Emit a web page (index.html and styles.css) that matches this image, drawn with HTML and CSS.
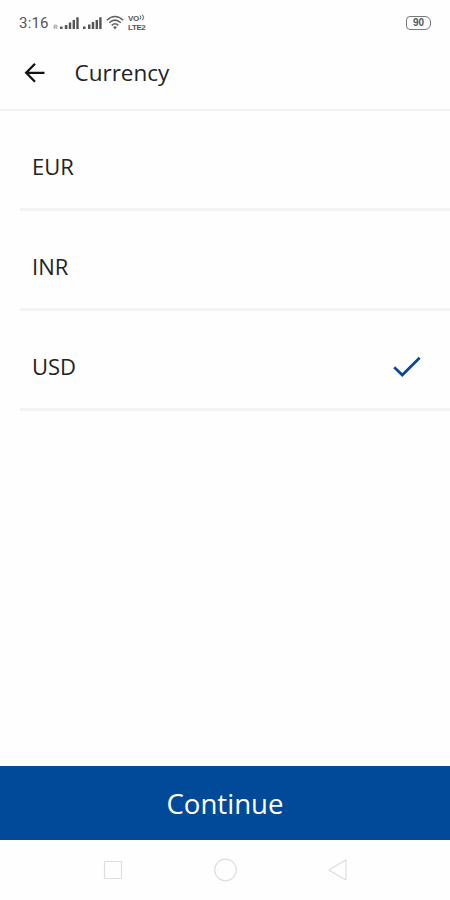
FILE: index.html
```html
<!DOCTYPE html>
<html lang="en">
<head>
<meta charset="utf-8">
<title>Currency</title>
<link rel="stylesheet" href="styles.css">
</head>
<body>
<div class="screen">
  <div class="status">
    <span class="time">3:16</span>
    <svg class="signals" width="50" height="16" viewBox="0 0 50 16" fill="#555">
      <path d="M1.2 13V9.2H3.2Q4.2 9.2 4.2 10.2T3.2 11.2H1.2M3 11.2L4.3 13" fill="none" stroke="#888" stroke-width=".8"/>
      <path d="M7 10.5h2.6V13H7zM11.8 9h2.6v4h-2.6zM15.8 6.5h2.4V13h-2.4zM19.6 4H22v9h-2.4zM23.3 1.2h2.4V13h-2.4z"/>
      <path d="M30 10.5h2.6V13H30zM35 8.5h2.5V13H35zM38.8 6h2.4v7h-2.4zM42.6 4H45v9h-2.4zM46.2 1.2h2.4V13h-2.4z"/>
    </svg>
    <svg class="wifi" width="18" height="16" viewBox="0 0 18 16" fill="none" stroke="#606060" stroke-width="1.5">
      <path d="M.8 5.2Q9-2.2 17.2 5.2M3.2 7.8Q9 2.4 14.8 7.8M5.7 10.4Q9 7.2 12.3 10.4"/>
      <path d="M7 12L9 14.5L11 12Q9 10.6 7 12Z" fill="#606060" stroke="none"/>
    </svg>
    <span class="volte"><span>VO<svg width="6" height="7" viewBox="0 0 6 7" fill="none" stroke="#555" stroke-width="1"><path d="M1 1.5Q2.7 3.5 1 5.5M3.4.7Q6 3.5 3.4 6.3"/></svg></span><span>LTE2</span></span>
    <span class="battery">90</span>
  </div>
  <header class="bar">
    <svg class="back" width="22" height="22" viewBox="0 0 22 22" fill="none" stroke="#111" stroke-width="2.3">
      <path d="M11 1.8L2.2 10.8L11 19.8M2.5 10.8H20.5"/>
    </svg>
    <h1>Currency</h1>
  </header>
  <ul class="list">
    <li>EUR</li>
    <li>INR</li>
    <li>USD
      <svg width="28" height="22" viewBox="0 0 28 22" fill="none" stroke="#08489b" stroke-width="2.7"><path d="M1.2 12.2L9.3 20L26.7 2.7"/></svg>
    </li>
  </ul>
  <button class="continue">Continue</button>
  <nav class="nav">
    <svg width="20" height="20" viewBox="0 0 20 20"><rect x="1.5" y="1.5" width="17" height="17" rx=".8"/></svg>
    <svg width="24" height="24" viewBox="0 0 24 24"><circle cx="11.5" cy="12" r="10.8"/></svg>
    <svg width="20" height="22" viewBox="0 0 20 22"><path d="M18 1.2V20.8Q18 21 17.5 20.8L1.6 11.5Q1 11 1.6 10.5L17.5 1.2Z"/></svg>
  </nav>
</div>
</body>
</html>
```
FILE: styles.css
```css
* { box-sizing: border-box; }
body { margin: 0; background: #fefefe; color: #222; font-family: "Open Sans", sans-serif; }
svg { display: block; flex: none; }
.screen { width: 450px; height: 900px; display: flex; flex-direction: column; }
.status { height: 46px; display: flex; align-items: center; padding: 0 19px 0 19px; color: #555; }
.time { width: 34px; font: 15px/18px Roboto, sans-serif; letter-spacing: .2px; }
.signals { width: 50px; margin-top: 2px; }
.wifi { margin-left: 3px; }
.volte { margin: 0 0 0 4px; display: flex; flex-direction: column; font: bold 8px/9px "Liberation Sans", sans-serif; letter-spacing: -.4px; }
.volte span { display: flex; height: 9px; }
.battery { margin-left: auto; width: 25px; height: 14px; border: 1.5px solid #777; border-radius: 4px 6px 6px 4px; font: bold 10px/12px "Liberation Sans", sans-serif; text-align: center; }
.bar { height: 65px; display: flex; align-items: center; padding: 0 0 10px 24px; border-bottom: 2px solid #f2f2f2; }
.bar h1 { margin: 0 0 0 28.5px; font-size: 22.5px; line-height: 32px; font-weight: 400; }
.list { list-style: none; margin: 0; padding: 0 0 0 20px; flex: 1; }
.list li { height: 100px; display: flex; align-items: center; justify-content: space-between; padding: 12px 29px 0 12px; border-bottom: 3px solid #f4f4f4; font-size: 22px; line-height: 30px; }
.continue { height: 74px; border: 0; padding: 0; background: #004a99; color: #fff; font: 27.6px/38px "Open Sans", sans-serif; }
.nav { height: 60px; display: flex; align-items: center; padding: 0 102px 0 103px; justify-content: space-between; fill: none; stroke: #dedede; stroke-width: 1.2; }
```
